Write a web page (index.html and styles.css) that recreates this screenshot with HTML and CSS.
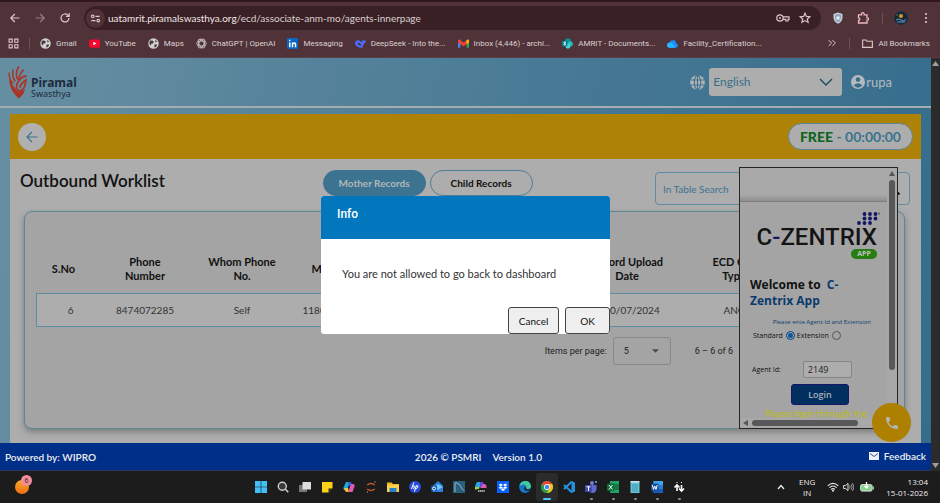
FILE: index.html
```html
<!DOCTYPE html>
<html lang="en">
<head>
<meta charset="utf-8">
<title>Outbound Worklist</title>
<link rel="stylesheet" href="styles.css">
</head>
<body>
<header class="browser">
  <div class="tabstrip"></div>
  <div class="toolbar">
    <button class="tool" aria-label="Back"><svg viewBox="0 0 12 12"><path d="M10.5 6H2M5.8 2 1.8 6l4 4" class="ln"/></svg></button>
    <button class="tool faint" aria-label="Forward"><svg viewBox="0 0 12 12"><path d="M1.5 6H10M6.2 2l4 4-4 4" class="ln"/></svg></button>
    <button class="tool" aria-label="Reload"><svg viewBox="0 0 12 12"><path d="M10 6a4 4 0 1 1-1.2-2.9L10 4.2M10.2 1v3.3H7" class="ln"/></svg></button>
    <div class="omnibox">
      <span class="site"><svg viewBox="0 0 12 12"><circle cx="3" cy="3.7" r="1.4" class="ln"/><path d="M6 3.7h4.5M1.5 8.3H6" class="ln"/><circle cx="9" cy="8.3" r="1.4" class="ln"/></svg></span>
      <span class="url"><b>uatamrit.piramalswasthya.org</b>/ecd/associate-anm-mo/agents-innerpage</span>
      <svg class="key" viewBox="0 0 14 10"><circle cx="4" cy="5" r="3.2" class="ln"/><circle cx="4" cy="5" r="1" fill="#ddc6c9"/><path d="M7 3.8h6v2.6h-1v1.6H9.8V6.4H7" class="ln"/></svg>
      <svg class="star" viewBox="0 0 12 12"><path d="m6 1.2 1.4 3.2 3.5.3-2.6 2.3.8 3.4L6 8.6l-3.1 1.8.8-3.4L1.1 4.7l3.5-.3z" class="ln"/></svg>
    </div>
    <svg class="ext" viewBox="0 0 12 12"><path d="M6 .5 10.5 2v4Q10 10 6 11.7 2 10 1.500 6V2z" fill="#c3cfdc"/><path d="M6 2 9 3v3Q8.500 9 6 10.200 3.500 9 3 6V3z" fill="#8fa3b8"/><path d="M4.500 4.500h3v3h-3z" fill="#e9eef4"/></svg>
    <svg class="ext" viewBox="0 0 12 12"><path d="M1.500 2.800H4.500V2a1.300 1.300 0 0 1 2.600 0v.8H10v3h.4a1.200 1.200 0 0 1 0 2.400H10v2.800H1.500V8.500a1.300 1.300 0 0 0 0-2.600z" fill="none" stroke="#f0b8c0" stroke-width="1.300"/></svg>
    <i class="sep"></i>
    <svg class="me" viewBox="0 0 14 14"><circle cx="7" cy="7" r="6.800" fill="#15293a"/><circle cx="7" cy="5" r="2" fill="#d49a1a"/><path d="M2 9q2.500-2 5 0t5-.5M3 11h8" stroke="#6798bd" fill="none"/><circle cx="3" cy="4" r=".7" fill="#44a56a"/></svg>
    <svg class="dots" viewBox="0 0 4 12"><circle cx="2" cy="2" r="1.100"/><circle cx="2" cy="6" r="1.100"/><circle cx="2" cy="10" r="1.100"/></svg>
  </div>
  <nav class="bookmarks">
    <svg class="apps" viewBox="0 0 12 12"><path d="M1.200 1.200h3.400v3.400H1.200zM7.400 1.200h3.400v3.400H7.400zM1.200 7.400h3.400v3.400H1.200zM7.400 7.400h3.400v3.400H7.400z" class="ln"/></svg>
    <i class="sep"></i>
    <a href="#"><svg viewBox="0 0 12 12"><circle cx="6" cy="6" r="5.700" fill="#d0d0d0"/><path d="M2 3q3-1 4 .5T5 6q-2 0-2 1.500T1.500 6.500zM7 7h3l-1 2.500-2 .8zM8 2l2 2-2 .6z" fill="#46393c"/></svg>Gmail</a>
    <a href="#"><svg viewBox="0 0 12 12"><rect y="1.500" width="12" height="9" rx="2" fill="#f5092f"/><path d="m4.800 4 3.400 2-3.400 2z" fill="#fff"/></svg>YouTube</a>
    <a href="#"><svg viewBox="0 0 12 12"><circle cx="6" cy="6" r="5.700" fill="#d0d0d0"/><path d="M2 3q3-1 4 .5T5 6q-2 0-2 1.500T1.500 6.500zM7 7h3l-1 2.500-2 .8zM8 2l2 2-2 .6z" fill="#46393c"/></svg>Maps</a>
    <a href="#"><svg viewBox="0 0 12 12" fill="none" stroke="#c9c1c2"><ellipse cx="6" cy="6" rx="5.200" ry="2.800"/><ellipse cx="6" cy="6" rx="5.200" ry="2.800" transform="rotate(60 6 6)"/><ellipse cx="6" cy="6" rx="5.200" ry="2.800" transform="rotate(120 6 6)"/></svg>ChatGPT | OpenAI</a>
    <a href="#"><svg viewBox="0 0 12 12"><rect width="12" height="12" rx="1" fill="#0a66c2"/><path d="M3 5v5M3 2v1.500M6 10V5M6 7q0-1.500 1.700-1.500T9.300 7v3" stroke="#fff" stroke-width="1.600" fill="none"/></svg>Messaging</a>
    <a href="#"><svg viewBox="0 0 12 12"><path d="M0 5q1-3 4-2.500L6.500 4q1 .5 1.500-.3L8.500 2q1 1.500 3.300.5Q12 5 10 6q-.5 2-2 3l1 1q-3 1-5 .2Q0 9 0 5z" fill="#4d6bfe"/><path d="M3 5q3 0 4 3-2 .8-3.500-.8z" fill="#50333a"/></svg>DeepSeek - Into the...</a>
    <a href="#"><svg viewBox="0 0 12 12"><path d="M0 2h2.600v8.500H0z" fill="#4285f4"/><path d="M9.400 2H12v8.500H9.400z" fill="#34a853"/><path d="M0 2.500 1.500 1.500 6 5l4.500-3.500L12 2.500V5L6 9 0 5z" fill="#ea4335"/><path d="m9.400 2.400 1.100-.9L12 2.500V5L9.400 6.700z" fill="#fbbc04"/></svg>Inbox (4,446) - archi...</a>
    <a href="#"><svg viewBox="0 0 12 12"><circle cx="6.500" cy="3.500" r="3.300" fill="#0c8f97"/><circle cx="9" cy="6.300" r="2.800" fill="#25bcc3"/><circle cx="6.500" cy="9" r="2.600" fill="#48d6dc"/><rect y="3" width="6" height="6" rx="1" fill="#078087"/><path d="M4.300 4.500H2.500L2 5.500l2 1-.5 1H1.800" stroke="#fff" fill="none"/></svg>AMRIT - Documents...</a>
    <a href="#"><svg viewBox="0 0 12 12"><path d="M0 8q0-2.500 2.500-3Q4 2 7 2.500T10 6q2 .5 2 2.200T10 10.500H2.500Q0 10.500 0 8z" fill="#1a8cff"/><path d="M0 8q0-2.500 2.500-3Q6 5 9 10.500H2.500Q0 10.500 0 8z" fill="#27b7ff"/></svg>Facility_Certification...</a>
    <svg class="more" viewBox="0 0 12 12"><path d="m2 2.500 3.500 3.500L2 9.500M6.500 2.500 10 6 6.500 9.500" class="ln"/></svg>
    <i class="sep"></i>
    <a href="#" class="all"><svg viewBox="0 0 12 12"><path d="M.7 2.200h3.600l1.200 1.400h5.800v6.600H.7z" class="ln"/></svg>All Bookmarks</a>
  </nav>
</header>

<div class="viewport">
  <div class="app">
    <header class="appbar">
      <div class="brand">
        <svg viewBox="0 0 20 33"><g fill="none" stroke="#ab3426" stroke-linecap="round"><path d="M11 31Q3 24 2.500 15" stroke-width="2.400"/><path d="M1 7q0 7 4 10" stroke-width="1.400"/><path d="M5 4q-1 7 2 11" stroke-width="1.500"/><path d="M10.500 1Q7 7 9.500 13" stroke-width="1.600"/><path d="M15.500 4Q11 8 11 14" stroke-width="1.600"/><path d="M18 10q-6 1-9 8-2 6 3 7 5-1 6-11-5 3-6 7" stroke-width="1.800"/></g><path d="M4 18q3 4 5 7 5 2 8-2-1 6-6 9-4-4-7-14z" fill="#ab3426"/></svg>
        <div class="brand-name"><b>Piramal</b><span>Swasthya</span></div>
      </div>
      <svg class="globe" viewBox="0 0 14 14"><circle cx="7" cy="7" r="6.800" fill="#adb5b9"/><path d="M7 0v14M.5 4.700h13M.5 9.300h13" stroke="#42718b"/><ellipse cx="7" cy="7" rx="3" ry="6.500" fill="none" stroke="#42718b"/></svg>
      <div class="lang"><select aria-label="Language"><option>English</option></select><svg viewBox="0 0 14 8"><path d="m1 1 6 6 6-6" fill="none" stroke="#164b60" stroke-width="1.400"/></svg></div>
      <div class="user"><svg viewBox="0 0 14 14"><circle cx="7" cy="7" r="7" fill="#b4babd"/><circle cx="7" cy="4.600" r="2.300" fill="#396e8b"/><path d="M2.600 10.300q4.400-4 8.800 0Q7 15 2.600 10.300z" fill="#396e8b"/></svg>rupa</div>
    </header>
    <main>
      <div class="statusbar">
        <button class="back" aria-label="Go back"><svg viewBox="0 0 12 12"><path d="M11.500 6H1.500M6 1 1 6l5 5" fill="none" stroke="#3d758f" stroke-width="1.200"/></svg></button>
        <div class="timer"><b>FREE</b> - 00:00:00</div>
      </div>
      <div class="heading">
        <h1>Outbound Worklist</h1>
        <div class="tabs"><button class="active">Mother Records</button><button>Child Records</button></div>
        <label class="search"><input type="text" placeholder="In Table Search" aria-label="In Table Search"><svg viewBox="0 0 12 12"><circle cx="5" cy="5" r="3.500" fill="none" stroke="#111" stroke-width="1.500"/><path d="m7.500 7.500 4 4" stroke="#111" stroke-width="2"/></svg></label>
      </div>
      <section class="card">
        <table>
          <colgroup><col class="c1"><col class="c2"><col class="c2"><col class="c3"><col class="c2"><col class="c4"><col></colgroup>
          <thead><tr><th>S.No</th><th>Phone<br>Number</th><th>Whom Phone<br>No.</th><th class="mother">Mother ID</th><th>Record Upload<br>Date</th><th>ECD Call<br>Type</th><th></th></tr></thead>
          <tbody><tr><td class="num">6</td><td>8474072285</td><td>Self</td><td class="mother-id">1180</td><td class="date">10/07/2024</td><td>ANC</td><td></td></tr></tbody>
        </table>
        <div class="pager"><label for="size">Items per page:</label><div class="size"><select id="size"><option>5</option></select><svg viewBox="0 0 8 4"><path d="M0 0h8L4 4z" fill="#4c4c4c"/></svg></div><span>6 – 6 of 6</span></div>
      </section>

      <aside class="softphone">
        <div class="pane">
          <div class="pane-top"></div>
          <div class="cz">
            <svg class="czdots" viewBox="0 0 24 13" fill="#151565"><circle cx="2" cy="11" r="1.900"/><circle cx="7.500" cy="11" r="1.900"/><circle cx="13" cy="11" r="1.900"/><circle cx="7.500" cy="6.500" r="1.900"/><circle cx="13" cy="6.500" r="1.900"/><circle cx="18.500" cy="6.500" r="1.900"/><circle cx="7.500" cy="2" r="1.900"/><circle cx="13" cy="2" r="1.900"/><circle cx="18.500" cy="2" r="1.900"/><path d="M21 1h2M22 1v2" stroke="#333" stroke-width=".6"/></svg>
            <div class="czname">C<i>-</i>ZENTRIX</div>
            <span class="czapp">APP</span>
          </div>
          <h2>Welcome to&nbsp; <span>C-Zentrix App</span></h2>
          <p class="hint">Please ente Agent-Id and Extension</p>
          <div class="mode"><label>Standard <input type="radio" name="mode" checked></label><label>Extension <input type="radio" name="mode"></label></div>
          <div class="agent"><label for="agent">Agent Id:</label><input id="agent" type="text" value="2149"></div>
          <button class="login">Login</button>
          <p class="warn">Please login through the</p>
        </div>
        <div class="vbar"><svg viewBox="0 0 6 5"><path d="M0 5h6L3 0z" fill="#555"/></svg><i></i></div>
        <div class="hbar"><svg viewBox="0 0 5 6"><path d="M5 0v6L0 3z" fill="#555"/></svg><i></i></div>
      </aside>
      <button class="call" aria-label="Call"><svg viewBox="0 0 24 24"><path d="M6.600 10.800c1.400 2.800 3.800 5.100 6.600 6.600l2.200-2.200c.3-.3.700-.4 1-.2 1.100.4 2.300.6 3.600.6.600 0 1 .4 1 1V20c0 .6-.4 1-1 1C10.600 21 3 13.400 3 4c0-.6.400-1 1-1h3.500c.6 0 1 .4 1 1 0 1.300.2 2.500.6 3.600.1.300 0 .7-.2 1z" fill="#b5b5b5"/></svg></button>
    </main>
    <footer class="foot"><span>Powered by: WIPRO</span><span class="mid"><span>2026 © PSMRI</span><span>Version 1.0</span></span><a href="#"><svg viewBox="0 0 10 8"><path d="M0 0h10v8H0z" fill="#eef1fa"/><path d="m1 1.500 4 3 4-3" fill="none" stroke="#3c4f92"/></svg>Feedback</a></footer>

    <div class="dialog" role="dialog" aria-labelledby="dlg">
      <h3 id="dlg">Info</h3>
      <p>You are not allowed to go back to dashboard</p>
      <div class="actions"><button>Cancel</button><button>OK</button></div>
    </div>
  </div>
  <div class="scroll"><svg viewBox="0 0 7 5"><path d="M0 5h7L3.500 0z" fill="#9f9f9f"/></svg><svg viewBox="0 0 7 5"><path d="M0 0h7L3.500 5z" fill="#9f9f9f"/></svg></div>
</div>

<footer class="taskbar">
  <div class="widget"><span></span><b>6</b></div>
  <div class="tasks">
    <span><svg viewBox="0 0 12 12"><path d="M0 0h5.700v5.700H0zM6.300 0H12v5.700H6.300zM0 6.300h5.700V12H0zM6.300 6.300H12V12H6.300z" fill="#42bff5"/></svg></span>
    <span><svg viewBox="0 0 12 12"><circle cx="5.300" cy="5.300" r="4" fill="#3a3a3a" stroke="#d0d0d0" stroke-width="1.400"/><path d="m8.300 8.300 3 3" stroke="#d0d0d0" stroke-width="1.600"/></svg></span>
    <span><svg viewBox="0 0 12 12"><path d="M0 4h8v7H0z" fill="#777"/><path d="M3.500 1H12v7.500H3.500z" fill="#dedede"/></svg></span>
    <span><svg viewBox="0 0 12 12"><path d="M1 1h10.500v6L7.500 11.500H1z" fill="#fcd116"/><path d="M7.500 11.500v-4h4z" fill="#2c2a20"/></svg></span>
    <span><svg viewBox="0 0 12 12"><path d="M3 1h4L4 9H2Q0 9 .5 6.500z" fill="#21a6dc"/><path d="M5 1h3l1 3-3 1z" fill="#375bd2"/><path d="M1 7h4l1 4H4Q2 11 1 7z" fill="#f2c33b"/><path d="M8 3h2q2 0 1.500 2.500L9.500 11H5z" fill="#d85ac0"/><path d="m6 8 2 3H5z" fill="#f26b4a"/></svg></span>
    <span><svg viewBox="0 0 12 12" fill="none" stroke="#c55a25" stroke-width="1.300"><path d="M2.200 4q3.800-3 7.600 0M2.200 8q3.800 3 7.600 0"/><path d="M9.500 1h1M2 11h1" stroke="#888"/></svg></span>
    <span><svg viewBox="0 0 12 12"><path d="M0 1.500h4.500L6 3h6v8H0z" fill="#f6b91c"/><path d="M0 4h12v7H0z" fill="#fbd152"/><path d="M2.500 7h7v4h-7z" fill="#2682c4"/></svg></span>
    <span><svg viewBox="0 0 12 12"><circle cx="6" cy="6" r="6" fill="#284cda"/><path d="M4.800 1.500 2.500 8M3.700 5q2-1 1.500 1L4.600 8M7.300 4.400 5.500 10.500M7 5q2.500-1 2 .8T6.200 7.800" stroke="#fff" fill="none"/></svg></span>
    <span><svg viewBox="0 0 12 12"><path d="M1.500 5 7 0l5 4.500V11H1.500z" fill="#267bd5"/><path d="m2 6 5-3 5 3v5H2z" fill="#70c5f5"/><path d="m3 11 9-5v5z" fill="#2f7fe6"/><rect y="4.500" width="6" height="6" rx="1" fill="#1156aa"/><circle cx="3" cy="7.500" r="1.500" fill="none" stroke="#fff"/></svg></span>
    <span><svg viewBox="0 0 12 12"><path d="M0 0h12v12H0z" fill="#2b607d"/><path d="M2 11V3q0-2 2-1 4 2 4.500 5L11 9.500" fill="none" stroke="#96b7c9"/></svg></span>
    <span><svg viewBox="0 0 12 12"><path d="M2 1h5L4 8H1Q-.5 6 .5 4z" fill="#29a4e4"/><path d="M5 1h3l1 3-4 2z" fill="#6448da"/><path d="M8 3h2q2 1 1.500 4H5z" fill="#d65bb7"/><path d="M0 6h4v2.500H0z" fill="#a4cc3a"/><path d="M2 8h9v4H2z" fill="#1a1a1a"/><path d="M3 10h7" stroke="#ddd" stroke-width="1.500" stroke-dasharray="1.300 .5"/></svg></span>
    <span><svg viewBox="0 0 12 12"><path d="M0 0h12v12H0z" fill="#0761fe"/><path d="m3.800 2.500 2.200 1.400-2.200 1.400L1.600 3.900zM8.200 2.500l2.200 1.400-2.200 1.400L6 3.900zM3.800 5.300 6 6.700 3.800 8 1.600 6.700zM8.200 5.300l2.200 1.400L8.200 8 6 6.700zM6 7.300l2.200 1.400L6 10 3.800 8.700z" fill="#fff"/></svg></span>
    <span><svg viewBox="0 0 12 12"><circle cx="6" cy="6" r="5.900" fill="#1577c9"/><path d="M.5 5Q1.500 0 6.500 0T12 5.500Q11.500 8 8.500 8 6.500 7.500 7.500 6 7 3 4 3.500T.5 5z" fill="#42c9a0"/><path d="M7 5.500q-1 2.500 2 3 2-.2 2.300-1l-.6 2.200Q9 10 7 9.500T5 6.500z" fill="#1c1c1c"/></svg></span>
    <span class="current"><svg viewBox="0 0 12 12"><circle cx="6" cy="6" r="6" fill="#34a853"/><path d="M.8 3A6 6 0 0 1 11.200 3L6 6z" fill="#ea4335"/><path d="M.8 3 3.500 7.500 6 12A6 6 0 0 1 .8 3z" fill="#2c9b4d"/><path d="M11.200 3A6 6 0 0 1 6 12l3-5-2-4z" fill="#fbc116"/><circle cx="6" cy="6" r="2.900" fill="#fff"/><circle cx="6" cy="6" r="2.200" fill="#4285f4"/></svg></span>
    <span><svg viewBox="0 0 12 12"><path d="m1 4 8 7.500M1 8 9 .5" stroke="#2493dd" stroke-width="2" fill="none"/><path d="M8.500 0 12 1.500v9L8.500 12z" fill="#2493dd"/></svg></span>
    <span class="open"><svg viewBox="0 0 12 12"><circle cx="7" cy="2" r="1.900" fill="#7b83eb"/><path d="M5 4h6.500v4q-.5 4-4 4T4 9z" fill="#6068d0"/><rect y="4" width="7" height="7" rx="1" fill="#4048a8"/><path d="M1.500 5.800h4M3.500 5.800V10" stroke="#fff"/><circle cx="11" cy="1" r="1" fill="#4cc2ff"/></svg></span>
    <span class="open"><svg viewBox="0 0 12 12"><path d="M3 0h9v12H3z" fill="#21a366"/><path d="M7.500 3H12v6H7.500z" fill="#107c41"/><rect y="2.500" width="7.500" height="7.500" rx="1" fill="#0d6b38"/><path d="m2 4 3.500 4.500M5.500 4 2 8.500" stroke="#fff"/></svg></span>
    <span class="open"><svg viewBox="0 0 12 12"><path d="M1.500 1h9v11h-9z" fill="#66c4db"/><path d="M1.500 0h9v1.500h-9z" fill="#d5e1e5"/><path d="M3 4h6M3 6h6M3 8h6M3 10h6" stroke="#2d879d" stroke-width=".7"/></svg></span>
    <span class="open"><svg viewBox="0 0 12 12"><path d="M2.500 0H12v12H2.500z" fill="#2b7cd3"/><path d="M2.500 0H12v4H2.500z" fill="#41a5ee"/><path d="M2.500 8H12v4H2.500z" fill="#185abd"/><rect y="2.500" width="7.500" height="7.500" rx="1" fill="#144b9b"/><path d="m1.300 4 1.200 4.500L3.700 5 5 8.500 6.200 4" fill="none" stroke="#fff"/></svg></span>
    <span class="open"><svg viewBox="0 0 12 12"><path d="M4 10V4M1.500 6.500 4 4l2.500 2.500M8.500 4v6M6 7.500 8.500 10 11 7.500" fill="none" stroke="#fff" stroke-width="1.600"/><path d="M3.500 1.500h1M8 1.500h1" stroke="#fff" stroke-width="1.200"/></svg></span>
  </div>
  <div class="tray">
    <svg class="up" viewBox="0 0 8 6"><path d="m1 5 3-3.500L7 5" fill="none" stroke="#eee" stroke-width="1.200"/></svg>
    <span class="kb">ENG<br>IN</span>
    <svg class="wifi" viewBox="0 0 12 10"><path d="M.7 3.800q5.300-5 10.600 0M2.400 5.700q3.600-3.400 7.200 0M4.100 7.500q1.900-1.700 3.800 0" fill="none" stroke="#e5e5e5" stroke-width="1.100"/><circle cx="6" cy="8.700" r="1" fill="#e5e5e5"/></svg>
    <svg class="vol" viewBox="0 0 11 10"><path d="M.6 3.500h2L5 1.300v7.400L2.600 6.500h-2z" fill="none" stroke="#ddd"/><path d="M6.500 3.500q1.300 1.500 0 3M8 2.200q2.400 2.800 0 5.600M9.500 1q3 4 0 8" fill="none" stroke="#bbb" stroke-width=".8"/></svg>
    <svg class="bat" viewBox="0 0 14 10"><rect x=".6" y="2.600" width="11.500" height="6.500" rx="1.500" fill="#83d58a" stroke="#ddd"/><path d="M13.300 4.500v3" stroke="#ddd"/><path d="M6.500 0v6M4.500 4l2 2 2-2" stroke="#fff" fill="none" stroke-width="1.300"/></svg>
    <span class="clock">13:04<br>15-01-2026</span>
  </div>
</footer>
</body>
</html>
```
FILE: styles.css
```css
* { box-sizing: border-box; }
body {
  margin: 0;
  height: 100vh;
  display: flex;
  flex-direction: column;
  overflow: hidden;
  background: #1c1c1c;
  font-family: Lato, sans-serif;
  font-size: 11px;
  color: #111;
}
button, input, select { font: inherit; color: inherit; }
svg { display: block; flex: none; }
a { color: inherit; text-decoration: none; }
.ln { fill: none; stroke: #ddc6c9; stroke-width: 1.2; }

/* Browser frame */
.browser {
  background: #4f3339;
  border-bottom: 1px solid #5d3f45;
  color: #ddd0d2;
}
.tabstrip { height: 2px; background: #30191d; }
.toolbar { display: flex; align-items: center; height: 32px; padding: 0 12px 0 9px; }
.tool { width: 12px; height: 12px; margin-right: 13px; padding: 0; border: 0; background: none; }
.faint { opacity: .5; }
.omnibox {
  flex: 1;
  display: flex;
  align-items: center;
  height: 24px;
  margin-right: 11px;
  padding: 0 10px 0 2px;
  border-radius: 12px;
  background: #382024;
  font-size: 10px;
}
.site { width: 19px; height: 19px; padding: 4px; margin-right: 3px; border-radius: 50%; background: #503238; }
.url { flex: 1; }
.url b { font-weight: 400; color: #f3e6e8; }
.key { width: 14px; height: 10px; margin-right: 9px; }
.star { width: 12px; height: 12px; }
.ext { width: 12px; height: 12px; margin-right: 13px; }
.sep { width: 1px; height: 11px; background: #715258; }
.me { width: 14px; height: 14px; margin: 0 16px 0 11px; }
.dots { width: 4px; height: 12px; fill: #ddc6c9; }
.bookmarks { display: flex; align-items: center; height: 23px; padding: 0 10px 5px 8px; gap: 12px; font-family: Roboto, sans-serif; font-size: 8px; white-space: nowrap; }
.bookmarks a { display: flex; align-items: center; gap: 5px; }
.bookmarks a svg, .apps { width: 11px; height: 11px; }
.apps + .sep { margin: 0 -2px; }
.more { width: 10px; height: 10px; margin-left: auto; }

/* Application */
.viewport { flex: 1; display: flex; min-height: 0; }
.app {
  position: relative;
  flex: 1;
  display: flex;
  flex-direction: column;
  background: linear-gradient(100deg, #678fa2, #467894 60%, #356c8c);
}
.scroll { width: 9px; padding: 3px 1px; display: flex; flex-direction: column; justify-content: space-between; background: #2b2b2b; }
.scroll svg { width: 7px; height: 5px; }
.appbar { display: flex; align-items: center; height: 50px; padding: 0 39px 0 8px; border-bottom: 2px solid #a4acb0; }
.brand { display: flex; align-items: center; gap: 3px; margin-right: auto; }
.brand svg { width: 20px; height: 33px; }
.brand-name { display: flex; flex-direction: column; padding-top: 10px; font-family: "Noto Sans", sans-serif; color: #1d2c40; }
.brand-name b { font-size: 12px; line-height: 14px; }
.brand-name span { font-size: 9px; line-height: 8px; }
.globe { width: 15px; height: 15px; margin-right: 4px; }
.lang { display: grid; align-items: center; width: 133px; height: 28px; border-radius: 3px; background: #adadad; }
.lang select, .lang svg { grid-area: 1 / 1; }
.lang select { width: 100%; height: 28px; padding: 0 4px 2px; border: 0; background: none; appearance: none; font-size: 12px; color: #37708c; }
.lang svg { width: 14px; height: 8px; margin-right: 9px; justify-self: end; }
.user { display: flex; align-items: center; gap: 1px; margin-left: 9px; font-size: 13px; color: #b4babd; }
.user svg { width: 14px; height: 14px; }

main { position: relative; flex: 1; display: flex; flex-direction: column; margin: 6px 10px 0; background: #adadad; }
.statusbar { display: flex; align-items: center; justify-content: space-between; height: 45px; padding: 0 8px; background: #ad8207; }
.back { display: grid; place-items: center; width: 28px; height: 28px; padding: 0; border: 0; border-radius: 50%; background: #b0b0b0; }
.back svg { width: 12px; height: 12px; }
.timer { height: 27px; padding: 0 11px; border: 1px solid #5c8698; border-radius: 14px; background: #adadad; font-size: 14px; line-height: 25px; font-weight: 700; color: #3b7390; }
.timer b { color: #0c6320; }
.heading { display: grid; grid-template-columns: 34% 1fr 255px; align-items: start; height: 52px; padding: 11px 11px 0 10px; }
h1 { margin: 0; font-size: 17px; line-height: 22px; font-weight: 600; color: #111; }
.tabs { display: flex; gap: 4px; }
.tabs button { width: 103px; height: 26px; padding: 0; border: 1px solid #4e7f98; border-radius: 13px; background: none; font-size: 10px; font-weight: 700; }
.tabs .active { background: #3c7390; border-color: #3c7390; color: #b0b7ba; }
.search { display: flex; align-items: center; height: 33px; margin-top: 2px; padding: 0 9px 0 7px; border: 1px solid #5c8da4; border-radius: 4px; }
.search input { flex: 1; min-width: 0; padding: 0; border: 0; outline: 0; background: none; font-size: 10px; }
.search input::placeholder { color: #3c7390; opacity: 1; }
.search svg { width: 12px; height: 12px; }

.card { flex: 1; margin: 0 16px 14px 14px; padding: 35px 11px 0; border: 1px solid #5c879b; border-radius: 8px; background: #a4a4a4; box-shadow: 0 3px 6px #7c7c7c; }
table { width: 100%; table-layout: fixed; border-collapse: collapse; }
.c1 { width: 60px; }
.c2 { width: 97px; }
.c3 { width: 288px; }
.c4 { width: 117px; }
th { height: 46px; padding: 0 0 2px; font-size: 11px; line-height: 14px; font-weight: 700; }
th:nth-child(1) { padding-right: 6px; }
td { height: 33px; padding: 0; border: solid #5c8da4; border-width: 1px 0; background: #adadad; font-size: 10px; text-align: center; color: #333; }
td:first-child { border-left-width: 1px; padding-left: 8px; }
td:last-child { border-right-width: 1px; }
.mother { text-align: left; padding-left: 21px; }
.mother-id { text-align: left; padding-left: 12px; }
.date { padding-left: 10px; }
.pager { display: flex; align-items: center; justify-content: flex-end; gap: 6px; margin-top: 10px; padding-right: 160px; font-family: Roboto, sans-serif; font-size: 9px; color: #222; }
.pager > span { margin-left: 18px; }
.size { display: grid; align-items: center; width: 58px; height: 28px; border: 1px solid #888; border-radius: 3px; }
.size select, .size svg { grid-area: 1 / 1; }
.size select { width: 100%; height: 26px; padding: 0 10px; border: 0; background: none; appearance: none; }
.size svg { width: 7px; height: 4px; margin-right: 11px; justify-self: end; }

/* Softphone window */
.softphone {
  position: absolute;
  top: 53px;
  right: 23px;
  bottom: 14px;
  width: 159px;
  display: grid;
  grid-template: minmax(0, 1fr) 10px / minmax(0, 1fr) 10px;
  border: 1px solid #252525;
  background: #a8a8a8;
  font-family: "Open Sans", sans-serif;
}
.pane { overflow: hidden; padding: 0 10px; background: #a4a4a4; }
.pane-top { height: 34px; margin: 0 -10px; border-bottom: 1px solid #7d7d7d; background: linear-gradient(#a9a9a9 80%, #8e8e8e); }
.cz { display: flex; flex-direction: column; align-items: flex-end; padding-top: 10px; }
.czdots { width: 24px; height: 13px; margin-right: -4px; }
.czname { font: 500 24px/24px Roboto, sans-serif; white-space: nowrap; color: #141414; }
.czname i { font-style: normal; color: #151565; }
.czapp { width: 26px; border-radius: 5px; background: #277c12; font-size: 7px; line-height: 10px; font-weight: 700; text-align: center; color: #bcc6b8; }
h2 { margin: 18px 0 0; font-size: 12px; line-height: 16px; color: #111; }
h2 span { color: #0a3a6e; }
.hint { margin: 9px 6px 0 0; font-size: 6px; line-height: 9px; text-align: right; color: #123f6c; }
.mode { display: flex; gap: 2px; margin: 3px 0 0 3px; font-size: 7px; line-height: 11px; }
.mode label, .agent { display: flex; align-items: center; }
.mode input { appearance: none; width: 9px; height: 9px; margin: 0 0 0 3px; border: 1px solid #555; border-radius: 50%; }
.mode input:checked { border-color: #0f5694; background: #0f5694; box-shadow: inset 0 0 0 1px #a9a9a9; }
.agent { gap: 22px; margin: 20px 0 0 2px; font-size: 7px; }
.agent input { width: 49px; height: 17px; padding: 0 4px; border: 1px solid #858585; border-radius: 2px; background: #adadad; font-size: 9px; color: #222; }
.login { display: block; width: 58px; height: 21px; margin: 6px 0 0 41px; padding: 0; border: 1px solid #15156a; border-radius: 3px; background: #012f60; font-size: 9px; font-weight: 600; color: #a9b1ba; }
.warn { margin: 2px -10px 0 15px; font-size: 9px; line-height: 14px; white-space: nowrap; color: #c0c000; }
.vbar { padding: 3px 2px; }
.vbar svg { width: 6px; height: 5px; }
.vbar i { display: block; width: 6px; height: 190px; margin-top: 4px; border-radius: 3px; background: #585858; }
.hbar { display: flex; align-items: center; gap: 4px; padding: 0 3px; }
.hbar svg { width: 5px; height: 6px; }
.hbar i { width: 106px; height: 6px; border-radius: 3px; background: #585858; }
.call { position: absolute; right: 10px; bottom: 1px; display: grid; place-items: center; width: 39px; height: 39px; padding: 0; border: 0; border-radius: 50%; background: #ad8000; }
.call svg { width: 16px; height: 16px; }

.foot { display: grid; grid-template-columns: 1fr auto 1fr; align-items: center; height: 28px; padding: 0 5px; background: #002f8a; border-bottom: 1px solid #27345e; color: #eee; font-size: 10px; font-weight: 600; }
.mid { display: flex; gap: 11px; padding-left: 26px; }
.foot a { display: flex; align-items: center; justify-self: end; gap: 5px; padding-bottom: 2px; }
.foot a svg { width: 10px; height: 8px; }

/* Message box */
.dialog { position: absolute; top: 138px; left: 321px; width: 289px; border-radius: 3px; overflow: hidden; background: #fff; }
h3 { height: 43px; margin: 0; padding: 10px 16px; background: #0277bd; color: #fff; font: 500 12px/16px Roboto, sans-serif; }
.dialog p { margin: 0; padding: 27px 21px 25px; font-size: 11px; line-height: 16px; color: #333; }
.actions { display: flex; justify-content: flex-end; gap: 6px; }
.actions button { height: 27px; padding: 0 10px; border: 1px solid #444; border-radius: 3px; background: #efefef; font-size: 10px; color: #111; }
.actions button + button { padding: 0 14px; }

/* Taskbar */
.taskbar { display: grid; grid-template-columns: 1fr auto 1fr; align-items: center; height: 32px; background: #1c1c1c; color: #eee; font-family: "Open Sans", sans-serif; font-size: 8px; }
.widget { position: relative; width: 14px; height: 14px; margin-left: 15px; }
.widget span { display: block; height: 14px; border-radius: 50%; background: linear-gradient(#f5ad26, #ef6b13); }
.widget b { position: absolute; top: -5px; left: 6px; width: 11px; height: 11px; border-radius: 50%; background: #f58c99; font-size: 7px; line-height: 11px; font-weight: 400; text-align: center; color: #222; }
.tasks { display: flex; }
.tasks span { position: relative; display: grid; place-items: center; width: 22px; height: 28px; }
.tasks svg { width: 12px; height: 12px; }
.tasks .current { width: 22px; border-radius: 3px; background: #2b2b2b; }
.open::after, .current::after { content: ""; position: absolute; bottom: 1px; width: 3px; height: 2px; border-radius: 1px; background: #8c8c8c; }
.current::after { width: 8px; background: #4cc2ff; }
.tray { display: flex; align-items: center; justify-content: flex-end; padding-right: 12px; line-height: 11px; }
.up { width: 8px; height: 6px; margin-right: 14px; }
.kb { text-align: center; margin-right: 12px; }
.wifi { width: 12px; height: 10px; margin-right: 4px; }
.vol { width: 11px; height: 10px; margin-right: 6px; }
.bat { width: 14px; height: 10px; margin-right: 12px; }
.clock { text-align: right; }
```
